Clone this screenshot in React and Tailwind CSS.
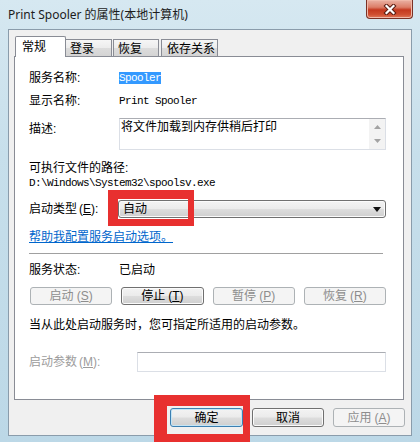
export default function App() {
  const btn =
    "flex h-[18px] items-center justify-center rounded-[3px] border border-[#707070] bg-[linear-gradient(180deg,#f3f3f3_0%,#ebebeb_48%,#dddddd_52%,#cfcfcf_100%)] shadow-[inset_0_0_0_1px_#fbfbfb] text-[12px] leading-[14px] text-black";
  const btnDis =
    "flex h-[18px] items-center justify-center rounded-[3px] border border-[#adb2b5] bg-[#f4f4f4] text-[12px] leading-[14px] text-[#8d8d8d]";
  return (
    <div className="relative h-[442px] w-[420px] overflow-hidden bg-[linear-gradient(180deg,#d6e8f1_0%,#c7dfeb_35%,#bcd8e7_100%)] font-['Liberation_Sans','Noto_Sans_CJK_SC',sans-serif] text-[12px] text-black">
      {/* title bar */}
      <div className="flex h-[29px] items-start justify-between pl-[8px] pr-[7px]">
        <span className="mt-[7px] font-['Noto_Sans','Noto_Sans_CJK_SC',sans-serif] text-[12px] leading-[16px] text-[#1c1c1c]">
          Print Spooler 的属性(本地计算机)
        </span>
        <div className="flex h-[19px] w-[47px] items-center justify-center rounded-b-[4px] border border-t-0 border-[#7a3125] bg-[linear-gradient(180deg,#eab2a4_0%,#dc7e68_40%,#c4391f_55%,#cf4e30_80%,#e07a5c_100%)] shadow-[inset_0_0_0_1px_#f0b9a9]">
          <svg width="14" height="11" viewBox="0 0 14 11">
            <path d="M3.5 2 L10.5 9 M10.5 2 L3.5 9" stroke="#5a1c12" strokeWidth="4.2" strokeLinecap="square" />
            <path d="M3.5 2 L10.5 9 M10.5 2 L3.5 9" stroke="#ffffff" strokeWidth="2.2" strokeLinecap="square" />
          </svg>
        </div>
      </div>

      {/* client area */}
      <div className="mx-[8px] flex h-[407px] flex-col border border-[#8a9cab] bg-[#f0f0f0]">
        {/* tabs */}
        <div className="relative z-10 ml-[6px] mt-[6px] flex h-[20px] items-start">
          <div className="h-[21px] w-[51px] rounded-t-[2px] border border-b-0 border-[#898c95] bg-white pl-[6px] pt-[3px] leading-[14px]">
            常规
          </div>
          <div className="mt-[3px] h-[17px] w-[46px] border border-b-0 border-l-0 border-[#898c95] bg-[linear-gradient(180deg,#f6f6f6_0%,#ececec_50%,#dcdcdc_51%,#d4d4d4_100%)] pl-[4px] pt-[2px] leading-[14px]">
            登录
          </div>
          <div className="ml-[1px] mt-[3px] h-[17px] w-[46px] border border-b-0 border-[#898c95] bg-[linear-gradient(180deg,#f6f6f6_0%,#ececec_50%,#dcdcdc_51%,#d4d4d4_100%)] pl-[4px] pt-[2px] leading-[14px]">
            恢复
          </div>
          <div className="ml-[2px] mt-[3px] h-[17px] w-[57px] border border-b-0 border-[#898c95] bg-[linear-gradient(180deg,#f6f6f6_0%,#ececec_50%,#dcdcdc_51%,#d4d4d4_100%)] pl-[5px] pt-[2px] leading-[14px]">
            依存关系
          </div>
        </div>

        {/* panel */}
        <div className="ml-[5px] flex h-[344px] w-[390px] flex-col border border-[#898c95] bg-white pl-[14px] pr-[17px] leading-[14px]">
          <div className="mt-[14px] flex h-[14px] items-center">
            <span className="w-[90px]">服务名称:</span>
            <span className="bg-[#3399ff] font-['Liberation_Mono',monospace] text-[11px] leading-[12px] tracking-[-0.6px] text-white">
              Spooler
            </span>
          </div>
          <div className="mt-[9px] flex h-[14px] items-center">
            <span className="w-[90px]">显示名称:</span>
            <span className="font-['Liberation_Mono',monospace] text-[11px] tracking-[-0.6px]">Print Spooler</span>
          </div>
          <div className="mt-[10px] flex h-[32px] items-start">
            <span className="mt-[4px] w-[90px]">描述:</span>
            <div className="flex h-[32px] flex-1 border border-[#dbdfe6] border-t-[#abadb3]">
              <div className="flex-1 pl-[1px] pt-[1px]">将文件加载到内存供稍后打印</div>
              <div className="flex w-[16px] flex-col justify-between bg-[#f3f3f3] py-[1px]">
                <div className="flex h-[14px] items-center justify-center">
                  <svg width="7" height="4" viewBox="0 0 7 4">
                    <path d="M0 4 L3.5 0 L7 4 Z" fill="#a3a3a3" />
                  </svg>
                </div>
                <div className="flex h-[14px] items-center justify-center">
                  <svg width="7" height="4" viewBox="0 0 7 4">
                    <path d="M0 0 L3.5 4 L7 0 Z" fill="#a3a3a3" />
                  </svg>
                </div>
              </div>
            </div>
          </div>
          <div className="mt-[11px] h-[14px]">可执行文件的路径:</div>
          <div className="mt-[1px] h-[14px] font-['Liberation_Mono',monospace] text-[11px] tracking-[-0.6px]">
            D:\Windows\System32\spoolsv.exe
          </div>
          <div className="mt-[10px] flex h-[18px] items-center">
            <span className="w-[89px]">
              启动类型<span className="ml-[2px]">(<span className="underline">E</span>):</span>
            </span>
            <div className="flex h-[18px] flex-1 items-center justify-between rounded-[3px] border border-[#707070] bg-[linear-gradient(180deg,#f3f3f3_0%,#ebebeb_48%,#dddddd_52%,#cfcfcf_100%)] pl-[4px] pr-[4px] shadow-[inset_0_0_0_1px_#fbfbfb]">
              <span>自动</span>
              <svg width="8" height="5" viewBox="0 0 8 5">
                <path d="M0 0 L8 0 L4 5 Z" fill="#111111" />
              </svg>
            </div>
          </div>
          <div className="mt-[12px] h-[14px]">
            <span className="text-[#0066cc] underline">帮助我配置服务启动选项。</span>
          </div>
          <div className="mr-[3px] mt-[9px] h-px bg-[#a0a0a0]" />
          <div className="mt-[9px] flex h-[14px] items-center">
            <span className="w-[90px]">服务状态:</span>
            <span>已启动</span>
          </div>
          <div className="mt-[10px] grid grid-cols-4 gap-[9px] pl-[1px]">
            <div className={btnDis}>
              启动<span className="ml-[3px]">(<span className="underline">S</span>)</span>
            </div>
            <div className={btn}>
              停止<span className="ml-[3px]">(<span className="underline">T</span>)</span>
            </div>
            <div className={btnDis}>
              暂停<span className="ml-[3px]">(<span className="underline">P</span>)</span>
            </div>
            <div className={btnDis}>
              恢复<span className="ml-[3px]">(<span className="underline">R</span>)</span>
            </div>
          </div>
          <div className="mt-[13px] h-[14px]">当从此处启动服务时，您可指定所适用的启动参数。</div>
          <div className="mt-[20px] flex h-[20px] items-center">
            <span className="w-[108px] text-[#9c9c9c]">
              启动参数<span className="ml-[2px]">(<span className="underline">M</span>):</span>
            </span>
            <div className="h-[20px] flex-1 border border-[#dbdfe6] border-t-[#abadb3] bg-white" />
          </div>
        </div>

        {/* dialog buttons */}
        <div className="mr-[6px] mt-[8px] flex justify-end gap-[9px]">
          <div className="flex h-[19px] w-[73px] items-center justify-center rounded-[3px] border border-[#3c7fb1] bg-[linear-gradient(180deg,#f3f3f3_0%,#ebebeb_48%,#dddddd_52%,#cfcfcf_100%)] shadow-[inset_0_0_0_1px_#c4e5f6] leading-[14px]">
            确定
          </div>
          <div className="flex h-[19px] w-[72px] items-center justify-center rounded-[3px] border border-[#707070] bg-[linear-gradient(180deg,#f3f3f3_0%,#ebebeb_48%,#dddddd_52%,#cfcfcf_100%)] shadow-[inset_0_0_0_1px_#fbfbfb] leading-[14px]">
            取消
          </div>
          <div className="flex h-[19px] w-[72px] items-center justify-center rounded-[3px] border border-[#adb2b5] bg-[#f4f4f4] leading-[14px] text-[#8d8d8d]">
            应用<span className="ml-[3px]">(<span className="underline">A</span>)</span>
          </div>
        </div>
      </div>

      {/* red annotation boxes */}
      <div className="absolute left-[108px] top-[190px] h-[36px] w-[86px] border-b-[7px] border-l-[10px] border-r-[6px] border-t-[9px] border-[#e8302f]" />
      <div className="absolute left-[154px] top-[395px] h-[47px] w-[96px] border-b-[8px] border-l-[13px] border-r-[7px] border-t-[11px] border-[#e8302f]" />
    </div>
  );
}
